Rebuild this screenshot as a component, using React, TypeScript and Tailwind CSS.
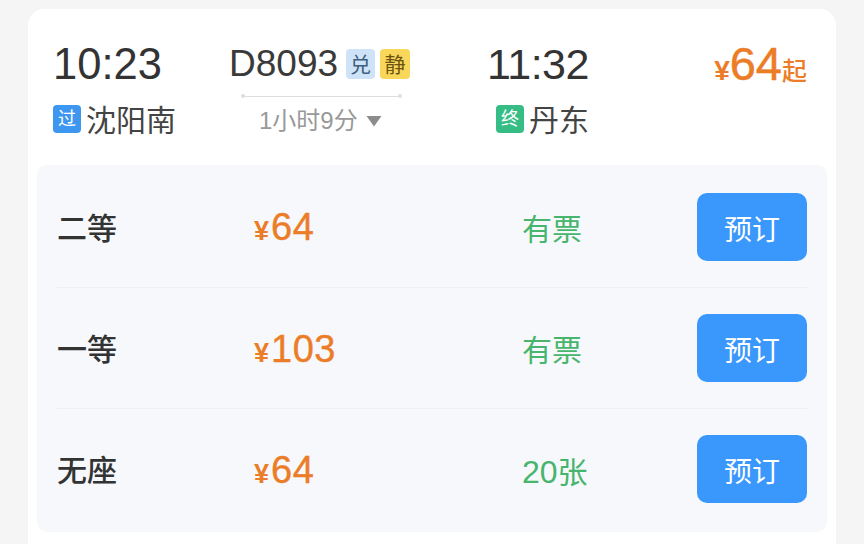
import type { ReactNode } from "react";

const font = { fontFamily: '"Liberation Sans", "Noto Sans CJK SC", sans-serif' };

const rows: { seat: string; price: string; stock: ReactNode }[] = [
  { seat: "二等", price: "64", stock: "有票" },
  { seat: "一等", price: "103", stock: "有票" },
  { seat: "无座", price: "64", stock: <><span className="text-[32px]">20</span>张</> },
];

function StationBadge({ label, color }: { label: string; color: string }) {
  return (
    <span className={`mb-[4px] flex h-[28px] w-[28px] items-center justify-center rounded-[4px] text-[18px] leading-none text-white ${color}`}>
      {label}
    </span>
  );
}

export default function App() {
  return (
    <div style={font} className="h-[544px] w-[864px] overflow-hidden bg-[#f5f5f5] px-[28px] pt-[9px]">
      <div className="h-[535px] rounded-t-[16px] bg-white px-[9px]">
        <div className="flex h-[156px] pl-[16px] pr-[20px] pt-[31px]">
          <div className="w-[176px]">
            <div className="text-[43.5px] leading-[48px] text-[#333333]">10:23</div>
            <div className="mt-[15px] flex items-center gap-[5px]">
              <StationBadge label="过" color="bg-[#3d97f0]" />
              <span className="text-[30px] leading-[36px] text-[#444444]">沈阳南</span>
            </div>
          </div>

          <div className="w-[258px]">
            <div className="flex h-[48px] items-center">
              <span className="text-[37px] leading-[48px] text-[#3a3a3a]">D8093</span>
              <span className="ml-[8px] flex h-[30px] w-[29px] items-center justify-center rounded-[4px] bg-[#cfe3f8] text-[21px] leading-none text-[#3f5f80]">兑</span>
              <span className="ml-[5px] flex h-[30px] w-[30px] items-center justify-center rounded-[4px] bg-[#f9d75a] text-[21px] leading-none text-[#6b5410]">静</span>
            </div>
            <div className="ml-[12px] mt-[6px] flex w-[161px] items-center">
              <span className="h-[4px] w-[4px] rounded-full bg-[#dddddd]" />
              <span className="h-[1px] flex-1 bg-[#dddddd]" />
              <span className="h-[4px] w-[4px] rounded-full bg-[#dddddd]" />
            </div>
            <div className="ml-[30px] mt-[8px] flex items-center text-[24px] leading-[30px] text-[#999999]">
              <span>1小时9分</span>
              <svg className="ml-[8px]" width="16" height="12" viewBox="0 0 16 12">
                <path d="M0.5 1h15L8 11.5z" fill="#8c8c8c" />
              </svg>
            </div>
          </div>

          <div>
            <div className="text-[43px] tracking-[-0.5px] leading-[48px] text-[#333333]">11:32</div>
            <div className="ml-[9px] mt-[15px] flex items-center gap-[5px]">
              <StationBadge label="终" color="bg-[#35bd85]" />
              <span className="text-[30px] leading-[36px] text-[#444444]">丹东</span>
            </div>
          </div>

          <div className="ml-auto flex h-[48px] items-baseline text-[#ec7d28]">
            <span className="text-[28px] font-bold leading-none">¥</span>
            <span className="text-[47px] leading-[48px] [-webkit-text-stroke:0.5px_#ec7d28]">64</span>
            <span className="text-[25px] font-medium leading-none">起</span>
          </div>
        </div>

        <div className="h-[367px] rounded-[10px] bg-[#f6f8fb] px-[20px] pt-[1px]">
          {rows.map((row, i) => (
            <div key={row.seat} className={`flex h-[121px] items-center ${i > 0 ? "border-t border-[#eef0f4]" : ""}`}>
              <span className="w-[197px] pt-[3px] text-[30px] font-medium text-[#333333]">{row.seat}</span>
              <span className="flex w-[268px] items-baseline pt-[1px] text-[#ec7d28]">
                <span className="mr-[2px] text-[27px] font-bold leading-none">¥</span>
                <span className="text-[38px] leading-none tracking-[0.5px] [-webkit-text-stroke:0.4px_#ec7d28]">{row.price}</span>
              </span>
              <span className="pt-[5px] text-[30px] text-[#47b56e]">{row.stock}</span>
              <button className="ml-auto h-[68px] w-[110px] rounded-[10px] bg-[#3a97fb] pt-[8px] text-[28px] text-white">预订</button>
            </div>
          ))}
        </div>
      </div>
    </div>
  );
}
